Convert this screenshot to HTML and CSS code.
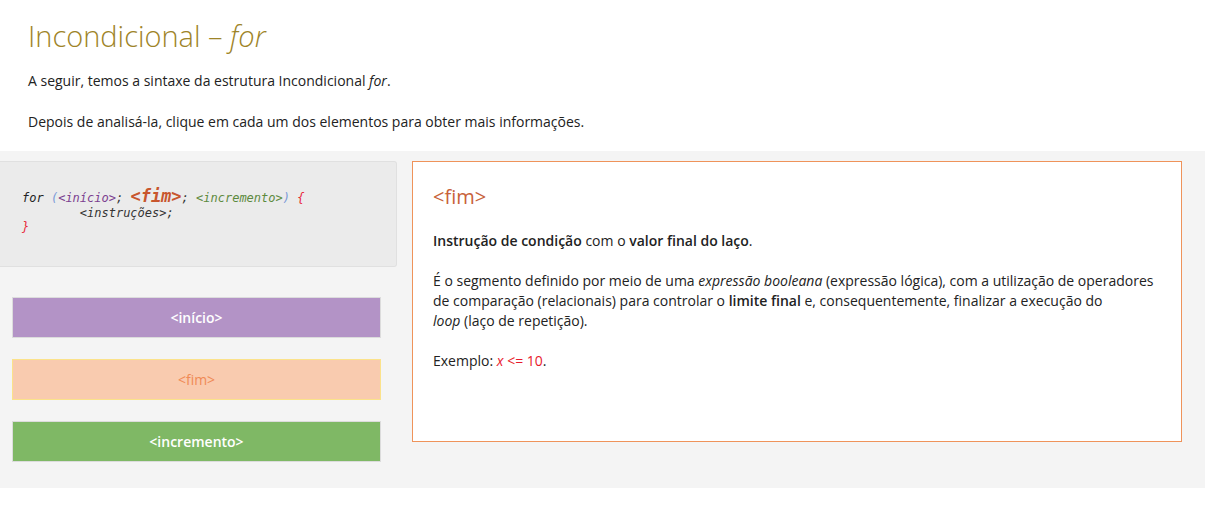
FILE: index.html
```html
<!DOCTYPE html>
<html lang="pt-BR">
<head>
<meta charset="utf-8">
<title>Incondicional – for</title>
<link rel="stylesheet" href="styles.css">
</head>
<body>
<header class="intro">
  <h1 class="title">Incondicional – <em>for</em></h1>
  <p>A seguir, temos a sintaxe da estrutura Incondicional <em>for</em>.</p>
  <p>Depois de analisá-la, clique em cada um dos elementos para obter mais informações.</p>
</header>
<section class="stage">
  <div class="left">
    <pre class="code"><span class="k">for</span> <span class="p">(</span><span class="ini">&lt;início&gt;</span>; <span class="fim">&lt;fim&gt;</span>; <span class="inc">&lt;incremento&gt;</span><span class="p">)</span> <span class="br">{</span>
        <span class="ins">&lt;instruções&gt;</span>;
<span class="br">}</span></pre>
    <div class="buttons">
      <button class="btn btn-ini">&lt;início&gt;</button>
      <button class="btn btn-fim">&lt;fim&gt;</button>
      <button class="btn btn-inc">&lt;incremento&gt;</button>
    </div>
  </div>
  <div class="panel">
    <h2 class="panel-title">&lt;fim&gt;</h2>
    <p><strong>Instrução de condição</strong> com o <strong>valor final do laço</strong>.</p>
    <p>É o segmento definido por meio de uma <em>expressão booleana</em> (expressão lógica), com a utilização de operadores de comparação (relacionais) para controlar o <strong>limite final</strong> e, consequentemente, finalizar a execução do<br><em>loop</em> (laço de repetição).</p>
    <p>Exemplo: <span class="ex"><em>x</em> &lt;= 10</span>.</p>
  </div>
</section>
</body>
</html>
```
FILE: styles.css
```css
* { box-sizing: border-box; }
html, body { margin: 0; padding: 0; background: #fff; }
body {
  font-family: "Open Sans", "Liberation Sans", sans-serif;
  font-size: 14px;
  line-height: 20px;
  color: #222;
}
.intro { padding: 16px 28px 19px 28px; }
.title {
  margin: 0 0 15px 0;
  font-size: 29px;
  line-height: 40px;
  font-weight: 300;
  color: #9e8428;
}
.intro p { margin: 0 0 21px 0; }
.intro p:last-child { margin-bottom: 0; }

.stage {
  background: #f4f4f4;
  display: flex;
  gap: 15px;
  padding: 10px 23px 26px 0;
  align-items: flex-start;
}
.left { width: 397px; flex: none; }
.code {
  margin: 0;
  height: 106px;
  background: #ebebeb;
  border: 1px solid #e0e0e0;
  border-left: none;
  border-radius: 0 3px 3px 0;
  padding: 27px 0 0 22px;
  font-family: "DejaVu Sans Mono", "Liberation Mono", monospace;
  font-style: italic;
  font-size: 12px;
  line-height: 14.5px;
  color: #333;
  tab-size: 8;
}
.code .k { color: #222; }
.code .p { color: #7a9ad8; }
.code .ini { color: #7b3f90; }
.code .fim { color: #c8562e; font-weight: bold; font-size: 17px; }
.code .inc { color: #5d8a3e; }
.code .br { color: #e8283a; }
.code .ins { color: #333; }

.buttons {
  display: flex;
  flex-direction: column;
  gap: 21px;
  padding: 30px 16px 0 12px;
}
.btn {
  display: block;
  width: 369px;
  height: 41px;
  border: 1px solid #dcdcdc;
  font-family: "Open Sans", "Liberation Sans", sans-serif;
  font-size: 14px;
  font-weight: 600;
  color: #fff;
  padding: 0;
  cursor: pointer;
}
.btn-ini { background: #b393c6; }
.btn-fim { background: #f9cbaf; border-color: #fbe28a; color: #f08a55; font-weight: 400; }
.btn-inc { background: #7fb865; }

.panel {
  flex: 1;
  height: 281px;
  background: #fff;
  border: 1px solid #ef935a;
  padding: 20px 20px 0 20px;
}
.panel-title {
  margin: 0 0 19px 0;
  font-size: 20px;
  line-height: 30px;
  font-weight: 400;
  color: #c8623a;
}
.panel p { margin: 0 0 20px 0; }
.panel strong { font-weight: 600; }
.ex { color: #e8192c; }
```
